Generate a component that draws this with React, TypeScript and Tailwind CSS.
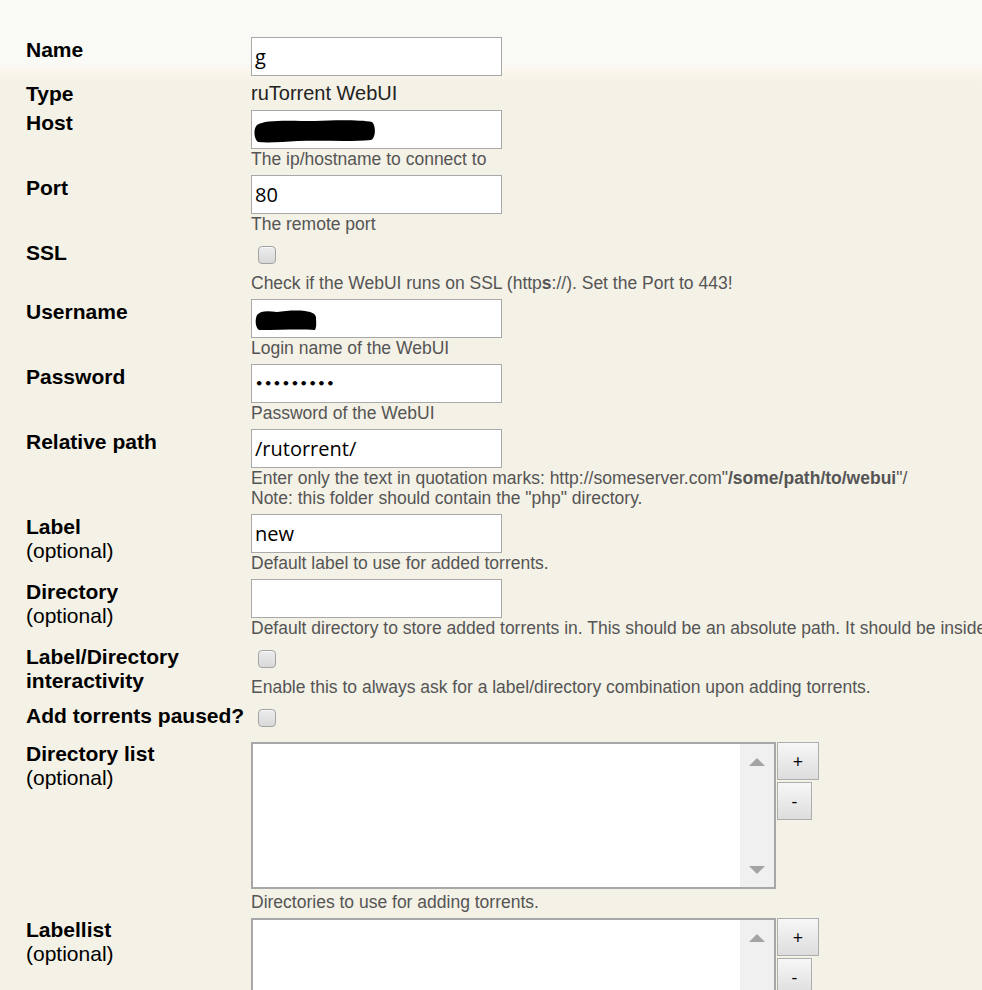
import React from "react";

const LABEL = "font-['Liberation_Sans',Arial,sans-serif] text-[21px] leading-[24px] text-black";
const HELP = "font-['Liberation_Sans',Arial,sans-serif] text-[17.5px] leading-[20px] text-[#555] whitespace-nowrap";
const INPUT_FONT = "font-['Open_Sans','Noto_Sans',sans-serif] text-[20px] text-black";

function Row({
  label,
  children,
  labelClass = "pt-[1px]",
}: {
  label: React.ReactNode;
  children: React.ReactNode;
  labelClass?: string;
}) {
  return (
    <div className="flex py-[3px]">
      <div className={`w-[251px] shrink-0 pl-[26px] ${LABEL} ${labelClass}`}>{label}</div>
      <div className="flex flex-col">{children}</div>
    </div>
  );
}

function Input({ value, children }: { value?: string; children?: React.ReactNode }) {
  return (
    <div
      className={`relative flex h-[39px] w-[251px] items-center border border-[#a9a9a9] bg-white px-[3px] ${INPUT_FONT}`}
    >
      {value}
      {children}
    </div>
  );
}

function Help({ children }: { children: React.ReactNode }) {
  return <div className={HELP}>{children}</div>;
}

function Checkbox() {
  return (
    <div className="h-[33px]">
      <div className="ml-[7px] mt-[6px] h-[18px] w-[18px] rounded-[4px] border border-[#a3a3a3] bg-[linear-gradient(to_bottom,#ececec,#d9d9d9)] shadow-[inset_0_1px_0_#f8f8f8]" />
    </div>
  );
}

function ListBox() {
  return (
    <div className="flex items-start">
      <div className="flex h-[147px] w-[525px] border-2 border-[#a7a7a7] bg-white">
        <div className="flex-1" />
        <div className="flex w-[34px] flex-col items-center justify-between bg-[#f0f0f0] pb-[13px] pt-[14px]">
          <svg width="16" height="8" viewBox="0 0 16 8">
            <path d="M8 0 L16 8 L0 8 Z" fill="#a3a3a3" />
          </svg>
          <svg width="16" height="8" viewBox="0 0 16 8">
            <path d="M0 0 L16 0 L8 8 Z" fill="#a3a3a3" />
          </svg>
        </div>
      </div>
      <div className="ml-px flex flex-col items-start">
        <div className="flex h-[38px] w-[42px] items-center justify-center border border-[#adadad] bg-[linear-gradient(to_bottom,#f7f7f7,#dddddd)] font-['Open_Sans',Arial,sans-serif] text-[18px] text-black">
          +
        </div>
        <div className="mt-[2px] flex h-[38px] w-[35px] items-center justify-center border border-[#adadad] bg-[linear-gradient(to_bottom,#f7f7f7,#dddddd)] font-['Open_Sans',Arial,sans-serif] text-[18px] text-black">
          -
        </div>
      </div>
    </div>
  );
}

export default function App() {
  return (
    <div className="h-[990px] w-[982px] overflow-hidden bg-[linear-gradient(to_bottom,#f9faf5_0px,#f9faf5_63px,#fbf7ee_70px,#f4f1e6_82px,#f4f1e6_100%)]">
      <div className="pt-[34px]">
        <Row label={<b>Name</b>}>
          <Input value="g" />
        </Row>

        <Row label={<b>Type</b>} labelClass="pt-[1px] !leading-[21px]">
          <div className="pt-[1px] font-['Liberation_Sans',Arial,sans-serif] text-[20px] leading-[21px] text-[#222]">
            ruTorrent WebUI
          </div>
        </Row>

        <Row label={<b>Host</b>}>
          <Input>
            <svg className="absolute left-[1px] top-[7px]" width="124" height="26" viewBox="0 0 124 26">
              <path
                d="M4 7 C 12 1, 40 3, 62 3 C 85 2, 108 2, 119 4 C 123 7, 123 20, 118 22 C 95 24, 70 22, 45 23 C 30 24, 15 25, 5 24 C 1 21, 0 11, 4 7 Z"
                fill="#000"
              />
            </svg>
          </Input>
          <Help>The ip/hostname to connect to</Help>
        </Row>

        <Row label={<b>Port</b>}>
          <Input value="80" />
          <Help>The remote port</Help>
        </Row>

        <Row label={<b>SSL</b>}>
          <Checkbox />
          <Help>
            Check if the WebUI runs on SSL (http<b>s</b>://). Set the Port to 443!
          </Help>
        </Row>

        <Row label={<b>Username</b>}>
          <Input>
            <svg className="absolute left-[3px] top-[9px]" width="64" height="22" viewBox="0 0 64 22">
              <path
                d="M2 6 C 6 1, 14 2, 22 3 C 30 2, 40 1, 50 2 C 56 3, 60 4, 61 8 C 61 13, 62 17, 60 21 C 45 20, 25 21, 4 21 C 0 18, 0 10, 2 6 Z"
                fill="#000"
              />
            </svg>
          </Input>
          <Help>Login name of the WebUI</Help>
        </Row>

        <Row label={<b>Password</b>}>
          <Input>
            <span className="font-['DejaVu_Sans',sans-serif] text-[13px] font-bold tracking-[0.6px] text-black">
              •••••••••
            </span>
          </Input>
          <Help>Password of the WebUI</Help>
        </Row>

        <Row label={<b>Relative path</b>}>
          <Input value="/rutorrent/" />
          <Help>
            Enter only the text in quotation marks: http://someserver.com"<b>/some/path/to/webui</b>"/
          </Help>
          <Help>Note: this folder should contain the "php" directory.</Help>
        </Row>

        <Row
          label={
            <>
              <b>Label</b>
              <br />
              (optional)
            </>
          }
        >
          <Input value="new" />
          <Help>Default label to use for added torrents.</Help>
        </Row>

        <Row
          label={
            <>
              <b>Directory</b>
              <br />
              (optional)
            </>
          }
        >
          <Input />
          <Help>
            Default directory to store added torrents in. This should be an absolute path. It should be inside
          </Help>
        </Row>

        <Row
          label={
            <b>
              Label/Directory
              <br />
              interactivity
            </b>
          }
        >
          <Checkbox />
          <Help>Enable this to always ask for a label/directory combination upon adding torrents.</Help>
        </Row>

        <Row label={<b className="whitespace-nowrap">Add torrents paused?</b>}>
          <Checkbox />
        </Row>

        <Row
          label={
            <>
              <b>Directory list</b>
              <br />
              (optional)
            </>
          }
          labelClass="pt-0"
        >
          <ListBox />
          <div className="mt-[3px]">
            <Help>Directories to use for adding torrents.</Help>
          </div>
        </Row>

        <Row
          label={
            <>
              <b>Labellist</b>
              <br />
              (optional)
            </>
          }
          labelClass="pt-0"
        >
          <ListBox />
        </Row>
      </div>
    </div>
  );
}
